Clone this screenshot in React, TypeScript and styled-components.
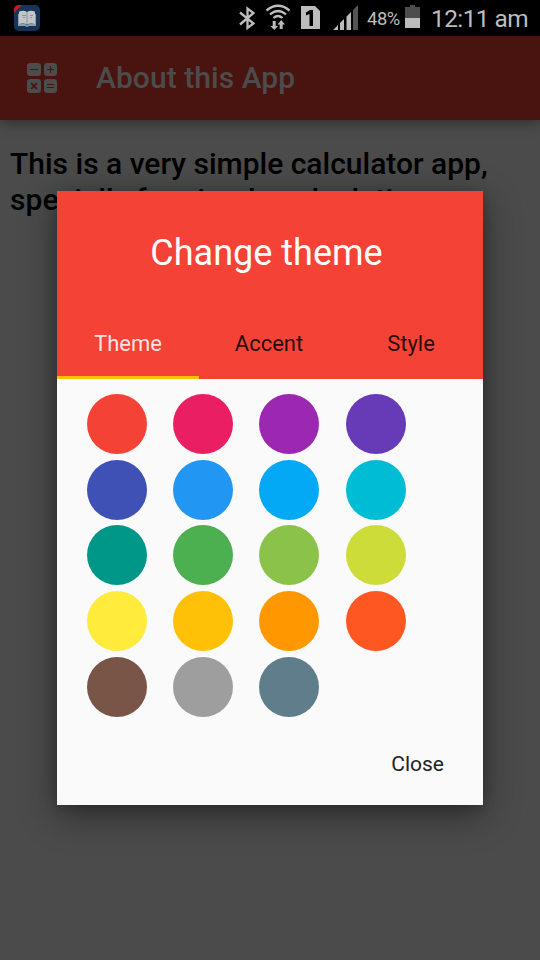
import React from "react";
import styled, { createGlobalStyle } from "styled-components";

const GlobalStyle = createGlobalStyle`
  * { box-sizing: border-box; }
  html, body { margin: 0; padding: 0; background: #000; overflow: hidden; }
`;

const Screen = styled.div`
  width: 540px;
  height: 960px;
  display: flex;
  flex-direction: column;
  position: relative;
  overflow: hidden;
  background: #4b4b4b;
  font-family: Roboto, sans-serif;
`;

const StatusBar = styled.header`
  height: 36px;
  flex: none;
  display: flex;
  align-items: center;
  background: #000;
  color: #bdbdbd;
  padding: 0 12px 0 14px;
  svg { display: block; flex: none; }
`;

const Spacer = styled.div`
  flex: 1;
`;

const Cluster = styled.div`
  display: flex;
  align-items: center;
`;

const Gap = styled.div<{ $w: number }>`
  width: ${(p) => p.$w}px;
`;

const Battery = styled.span`
  font-size: 18.4px;
  line-height: 36px;
  letter-spacing: -0.45px;
  margin: 2px 5px 0 8px;
  width: 33px;
  white-space: nowrap;
`;

const Clock = styled.span`
  font-size: 24.4px;
  line-height: 36px;
  letter-spacing: -0.55px;
  margin: 2px 0 0 11px;
  width: 97px;
  white-space: nowrap;
`;

const AppBar = styled.div`
  height: 84px;
  flex: none;
  display: flex;
  align-items: center;
  padding-left: 27px;
  gap: 39px;
  background: #491410;
  box-shadow: 0 3px 12px rgba(0, 0, 0, 0.38);
  z-index: 1;
`;

const AppTitle = styled.h1`
  margin: 0;
  font-size: 30px;
  font-weight: 500;
  line-height: 36px;
  letter-spacing: 0.05px;
  color: #4c4c4c;
  white-space: nowrap;
`;

const Intro = styled.p`
  margin: 26px 0 0 10px;
  font-size: 30px;
  line-height: 36px;
  font-weight: 500;
  color: #000;
  white-space: nowrap;
`;

const IntroLine = styled.span<{ $spacing?: number }>`
  display: block;
  letter-spacing: ${(p) => p.$spacing ?? 0}px;
`;

const DialogLayer = styled.div`
  position: absolute;
  inset: 190.6px 57px 154.6px;
  z-index: 2;
`;

const Dialog = styled.section`
  height: 614.8px;
  display: flex;
  flex-direction: column;
  background: #fafafa;
  box-shadow: 0 10px 34px rgba(0, 0, 0, 0.42), 0 2px 12px rgba(0, 0, 0, 0.2);
`;

const DialogHead = styled.div`
  height: 188.4px;
  flex: none;
  display: flex;
  flex-direction: column;
  background: #f44336;
`;

const DialogTitle = styled.h2`
  margin: 0;
  height: 117.4px;
  padding: 40.4px 7px 0 0;
  text-align: center;
  font-size: 36px;
  line-height: 44px;
  font-weight: 400;
  color: #fff;
`;

const Tabs = styled.nav`
  height: 71px;
  display: grid;
  grid-template-columns: repeat(3, 142px);
`;

const Tab = styled.div<{ $active?: boolean }>`
  padding: 21px ${(p) => (p.$active ? 0 : 2)}px 0 0;
  text-align: center;
  font-size: 22px;
  line-height: 30px;
  color: ${(p) => (p.$active ? "rgba(255,255,255,.87)" : "rgba(0,0,0,.87)")};
  border-bottom: 3px solid ${(p) => (p.$active ? "#ffc107" : "transparent")};
`;

const Palette = styled.div`
  display: grid;
  grid-template-columns: repeat(4, 60px);
  grid-auto-rows: 60px;
  column-gap: 26.2px;
  row-gap: 5.65px;
  padding: 15px 0 0 30px;
`;

const Swatch = styled.div<{ $color: string }>`
  border-radius: 50%;
  background: ${(p) => p.$color};
`;

const Actions = styled.footer`
  margin-top: auto;
  display: flex;
  justify-content: flex-end;
  padding: 0 39px 26.4px 0;
`;

const CloseButton = styled.button`
  border: 0;
  padding: 0;
  background: none;
  font: 400 21px/30px Roboto, sans-serif;
  color: #212121;
`;

const colors = [
  "#f44336", "#e91e63", "#9c27b0", "#673ab7",
  "#3f51b5", "#2196f3", "#03a9f4", "#00bcd4",
  "#009688", "#4caf50", "#8bc34a", "#cddc39",
  "#ffeb3b", "#ffc107", "#ff9800", "#ff5722",
  "#795548", "#9e9e9e", "#607d8b",
];

const BookIcon = () => (
  <svg width="26" height="36" viewBox="0 0 26 36">
    <rect y="5" width="26" height="26" rx="5" fill="#173558" />
    <path d="M0 13V10a5 5 0 0 1 5-5h3z" fill="#c51c20" />
    <path d="M4 14h1v10h6l2 1 2-1h6V14h1v12h-7l-2 1-2-1H4z" fill="#8c9eaf" />
    <path d="M5 11.5q5-1.5 8 .5 3-2 8-.5V24q-5-1-8 .5Q10 23 5 24z" fill="#c3c5c6" />
    <path d="M13 12v12M8 15.5h4M9 17.5h2M16 15.5h3M16 17.5h2" stroke="#8196a8" fill="none" />
  </svg>
);

const BluetoothIcon = () => (
  <svg width="17" height="36" viewBox="0 0 17 36">
    <path d="M2 12.5L15.5 23.5 9.5 28V8.5l6 4.5L2 24.5" fill="none" stroke="#bdbdbd" strokeWidth="2.3" />
  </svg>
);

const WifiIcon = () => (
  <svg width="26" height="36" viewBox="0 0 26 36">
    <g fill="none" stroke="#bdbdbd" strokeWidth="2.3">
      <path d="M1.5 10.5q11.5-9.5 23 0M5 14.5q8-7 16 0M8.5 18q4.5-4 9 0" />
    </g>
    <path d="M7.7 21h3v5h2.3L9.2 30l-3.8-4h2.3zM14.7 29h3v-4.5H20L16.2 20l-3.6 4.5h2.1z" fill="#bdbdbd" />
  </svg>
);

const SimIcon = () => (
  <svg width="19" height="36" viewBox="0 0 19 36">
    <path d="M0 6h14l5 5v18H0z" fill="#bdbdbd" />
    <path d="M5 12.5l4-2.5h3v16H8.5V14L5 15.5z" fill="#000" />
  </svg>
);

const SignalIcon = () => (
  <svg width="26" height="36" viewBox="0 0 26 36">
    <path d="M0 30l5-5v5zM7 23l4-4v11H7zM13.5 16.5l4.5-4.5V30h-4.5z" fill="#bdbdbd" />
    <path d="M20 10l5-5v25h-5z" fill="#555" />
  </svg>
);

const BatteryIcon = () => (
  <svg width="15" height="36" viewBox="0 0 15 36">
    <path d="M0 7h5V5h5v2h5v11H0z" fill="#4d4d4d" />
    <path d="M0 18h15v10H0z" fill="#bdbdbd" />
  </svg>
);

const CalculatorIcon = () => (
  <svg width="30" height="32" viewBox="0 0 30 32">
    <g fill="#4c4c4c">
      <rect y="1" width="14" height="13" rx="3" />
      <rect x="17" y="1" width="13" height="13" rx="3" />
      <rect y="17" width="14" height="14" rx="3" />
      <rect x="17" y="17" width="13" height="14" rx="3" />
    </g>
    <path d="M3 7.5h8M20 7.5h7M23.5 4v7M20 22.5h7M20 25.5h7" stroke="#491410" strokeWidth="1.1" />
    <path d="M4.2 21.2l5.6 5.6M9.8 21.2l-5.6 5.6" stroke="#491410" strokeWidth="1.8" />
  </svg>
);

export default function App() {
  return (
    <>
      <GlobalStyle />
      <Screen>
        <StatusBar>
          <BookIcon />
          <Spacer />
          <Cluster>
            <BluetoothIcon />
            <Gap $w={10} />
            <WifiIcon />
            <Gap $w={10} />
            <SimIcon />
            <Gap $w={13} />
            <SignalIcon />
            <Battery>48%</Battery>
            <BatteryIcon />
            <Clock>12:11 am</Clock>
          </Cluster>
        </StatusBar>
        <AppBar>
          <CalculatorIcon />
          <AppTitle>About this App</AppTitle>
        </AppBar>
        <Intro>
          <IntroLine>This is a very simple calculator app,</IntroLine>
          <IntroLine $spacing={0.06}>specially for simple calculation.</IntroLine>
        </Intro>
        <DialogLayer>
          <Dialog>
            <DialogHead>
              <DialogTitle>Change theme</DialogTitle>
              <Tabs>
                <Tab $active>Theme</Tab>
                <Tab>Accent</Tab>
                <Tab>Style</Tab>
              </Tabs>
            </DialogHead>
            <Palette>
              {colors.map((c) => (
                <Swatch key={c} $color={c} />
              ))}
            </Palette>
            <Actions>
              <CloseButton>Close</CloseButton>
            </Actions>
          </Dialog>
        </DialogLayer>
      </Screen>
    </>
  );
}
